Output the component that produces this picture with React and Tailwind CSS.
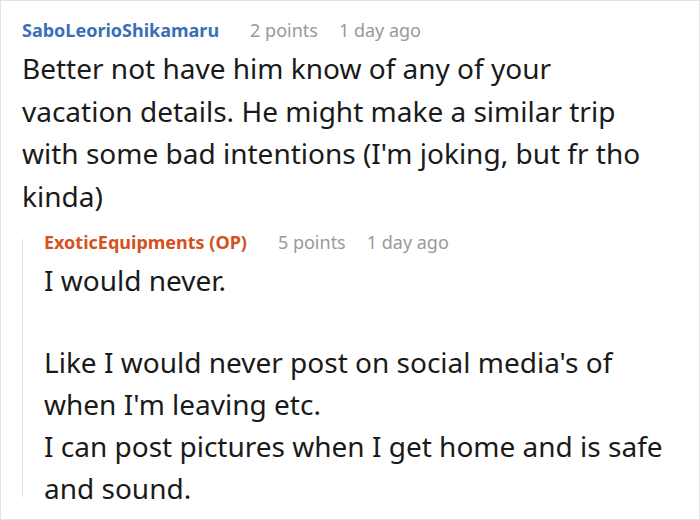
export default function App() {
  return (
    <div
      className="w-[700px] h-[520px] bg-white border border-[#e2e2e2] overflow-hidden box-border"
      style={{ fontFamily: '"Noto Sans", sans-serif' }}
    >
      <div className="pl-[21px] pt-[14px]">
        <div className="flex items-baseline text-[18px] leading-[30px]">
          <span className="font-bold text-[#3b6fb6]">SaboLeorioShikamaru</span>
          <span className="ml-[31px] text-[#999999]">2 points</span>
          <span className="ml-[21px] text-[#999999]">1 day ago</span>
        </div>
        <p className="mt-[2px] w-[625px] text-[28px] leading-[42.5px] text-[#1a1a1a]">
          Better not have him know of any of your vacation details. He might make a similar trip with some bad intentions (I'm joking, but fr tho kinda)
        </p>
        <div className="mt-[10px] flex">
          <div className="w-px bg-[#dddddd] mt-[12px] mb-[12px]"></div>
          <div className="pl-[21px]">
            <div className="flex items-baseline text-[18px] leading-[30px]">
              <span className="font-bold text-[#d4511e]">ExoticEquipments (OP)</span>
              <span className="ml-[31px] text-[#999999]">5 points</span>
              <span className="ml-[21px] text-[#999999]">1 day ago</span>
            </div>
            <div className="mt-[2px] w-[622px] text-[28px] leading-[42px] text-[#1a1a1a]">
              <p>I would never.</p>
              <p className="h-[40px]"></p>
              <p>Like I would never post on social media's of when I'm leaving etc.</p>
              <p>I can post pictures when I get home and is safe and sound.</p>
            </div>
          </div>
        </div>
      </div>
    </div>
  );
}
